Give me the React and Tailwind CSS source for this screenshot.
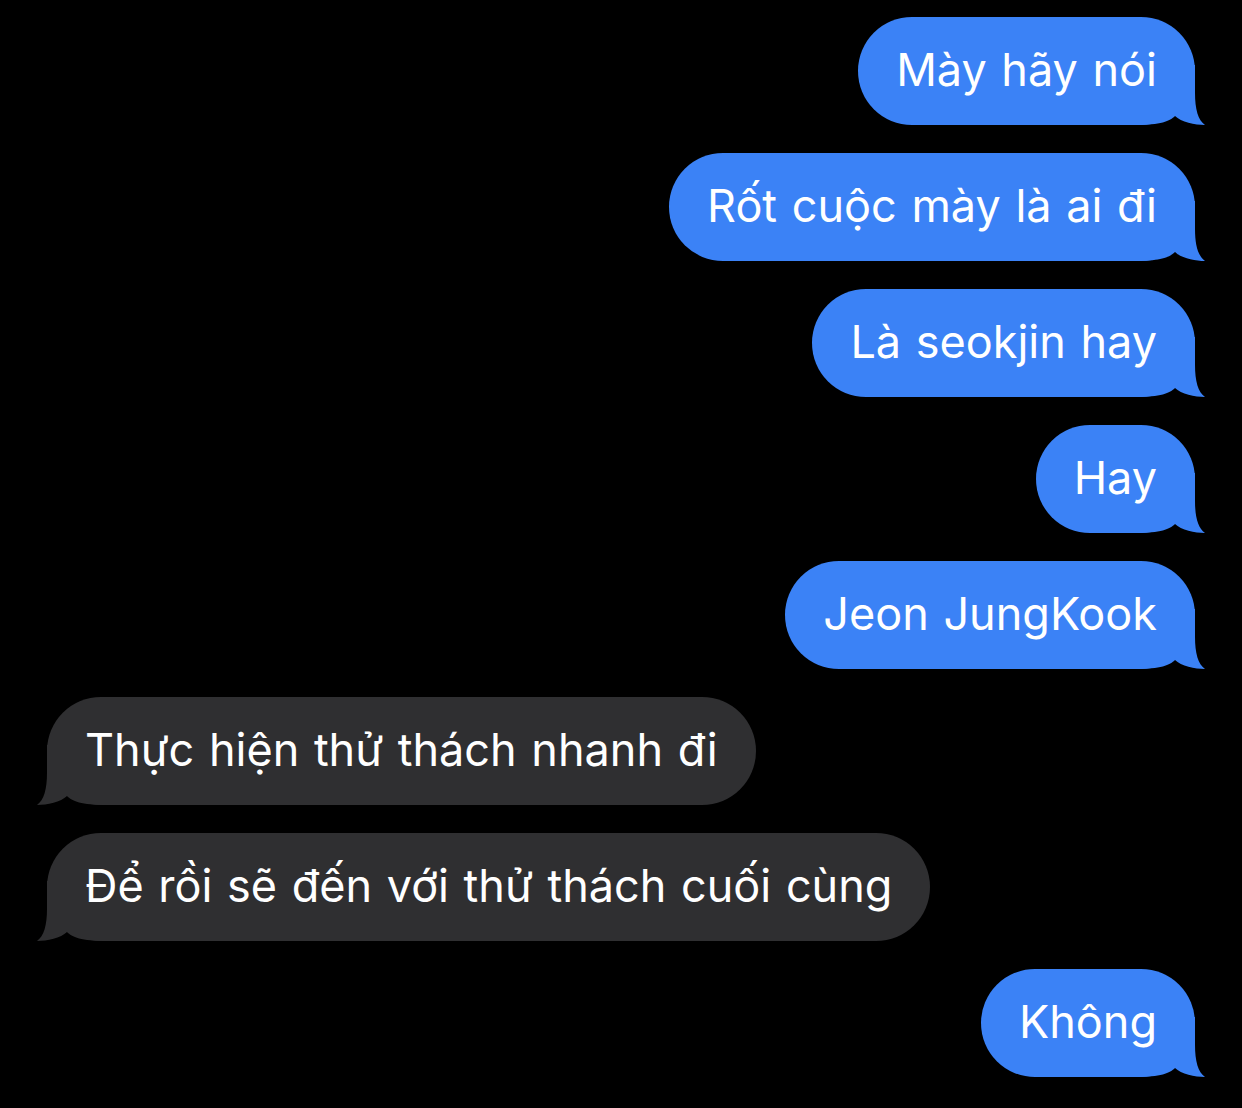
import React from 'react';

const messages = [
  { me: true, text: 'Mày hãy nói' },
  { me: true, text: 'Rốt cuộc mày là ai đi' },
  { me: true, text: 'Là seokjin hay' },
  { me: true, text: 'Hay' },
  { me: true, text: 'Jeon JungKook' },
  { me: false, text: 'Thực hiện thử thách nhanh đi' },
  { me: false, text: 'Để rồi sẽ đến với thử thách cuối cùng' },
  { me: true, text: 'Không' },
];

function Tail({ me }) {
  // tail drawn over the bottom corner of the bubble
  const cls = me
    ? 'absolute -right-[10px] bottom-0 fill-[#3b82f6]'
    : 'absolute -left-[10px] bottom-0 fill-[#2f2f31] -scale-x-100';
  return (
    <svg className={cls} width="70" height="60" viewBox="0 0 70 60">
      <path d="M0 0 H60 V28 C60 44 63 55 70 60 C60 60 46 57 40 51 C35 56 26 60 0 60 Z" />
    </svg>
  );
}

function Bubble({ me, text }) {
  return (
    <div className={`flex ${me ? 'justify-end pr-[47px]' : 'justify-start pl-[47px]'}`}>
      <div
        className={`relative flex h-[108px] items-center rounded-[54px] px-[38px] pb-[3px] ${
          me ? 'bg-[#3b82f6]' : 'bg-[#2f2f31]'
        }`}
      >
        <Tail me={me} />
        <span className="relative text-[45px] leading-none text-white whitespace-nowrap [word-spacing:2px]">
          {text}
        </span>
      </div>
    </div>
  );
}

export default function App() {
  return (
    <div
      className="min-h-[1108px] w-full bg-black pt-[17px] flex flex-col gap-[28px]"
      style={{ fontFamily: 'Inter, "Noto Sans", sans-serif' }}
    >
      {messages.map((m, i) => (
        <Bubble key={i} {...m} />
      ))}
    </div>
  );
}
